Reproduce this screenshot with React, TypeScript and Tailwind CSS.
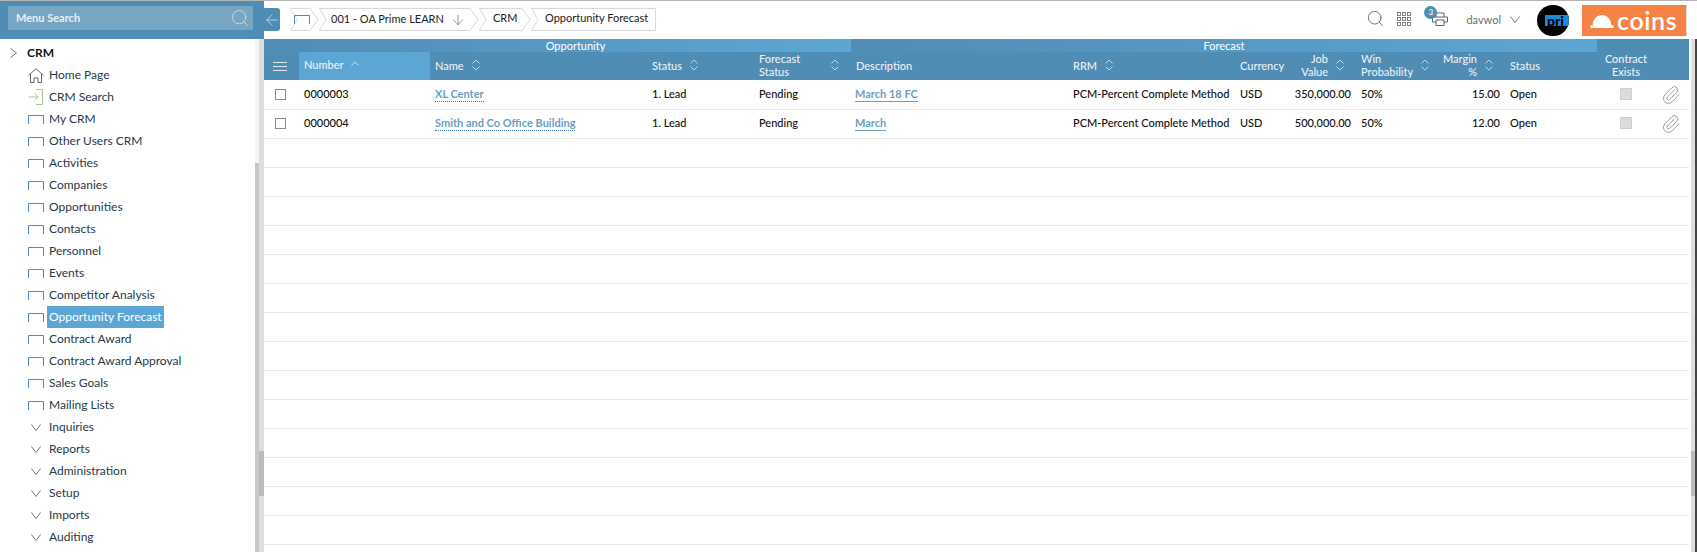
import React from 'react';
import { ArrowDown, ArrowLeft, Paperclip, Search } from 'lucide-react';

const BLUE = 'bg-[#4f8db5]';

const menuItems = [
  'My CRM',
  'Other Users CRM',
  'Activities',
  'Companies',
  'Opportunities',
  'Contacts',
  'Personnel',
  'Events',
  'Competitor Analysis',
  'Opportunity Forecast',
  'Contract Award',
  'Contract Award Approval',
  'Sales Goals',
  'Mailing Lists',
];

const folders = ['Inquiries', 'Reports', 'Administration', 'Setup', 'Imports', 'Auditing'];

const rows = [
  { number: '0000003', name: 'XL Center', description: 'March 18 FC', value: '350,000.00', margin: '15.00' },
  { number: '0000004', name: 'Smith and Co Office Building', description: 'March', value: '500,000.00', margin: '12.00' },
];

const cols = 'grid grid-cols-[35px_131px_217px_107px_97px_217px_167px_58px_63px_94px_55px_92px_58px_34px]';

const PageIcon = () => (
  <svg width="16" height="9" viewBox="0 0 16 9" fill="none" className="shrink-0">
    <path d="M0.5 9V0.5H15.5V9" stroke="#4f8db5" />
  </svg>
);

const SortIcon = () => (
  <svg width="8" height="12" viewBox="0 0 8 12" fill="none" className="shrink-0 ml-2">
    <path d="M0.5 4.5L4 1L7.5 4.5M0.5 7.5L4 11L7.5 7.5" stroke="#c9dce8" strokeWidth="0.9" />
  </svg>
);

const DownChevron = ({ className = '' }: { className?: string }) => (
  <svg width="10" height="7" viewBox="0 0 10 7" fill="none" className={`shrink-0 ${className}`}>
    <path d="M0.5 0.5L5 6.5L9.5 0.5" stroke="#777" />
  </svg>
);

const Crumb = ({ width, last, children }: { width: number; last?: boolean; children: React.ReactNode }) => (
  <div className="relative h-[23px] shrink-0 flex items-center whitespace-nowrap" style={{ width }}>
    <svg width={width} height="23" className="absolute inset-0" fill="none">
      <path
        d={
          last
            ? `M0.5 0.5H${width - 0.5}V22.5H0.5L7 11.5Z`
            : `M0.5 0.5H${width - 9}L${width - 1} 11.5L${width - 9} 22.5H0.5L7 11.5Z`
        }
        stroke="#d9d9d9"
      />
    </svg>
    <div className="relative flex items-center">{children}</div>
  </div>
);

const HeaderCell = ({ children, sort = true }: { children: React.ReactNode; sort?: boolean }) => (
  <div className="flex items-center pl-[5px] pb-[2px]">
    <span className="leading-[13px]">{children}</span>
    {sort && <SortIcon />}
  </div>
);

const Cell = ({ children, right = false }: { children?: React.ReactNode; right?: boolean }) => (
  <div className={`flex items-center whitespace-nowrap pl-[5px] pb-[2px] ${right ? 'justify-end pr-[5px]' : ''}`}>{children}</div>
);

export default function App() {
  return (
    <div
      className="w-[1697px] h-[552px] overflow-hidden bg-white flex flex-col text-[11px] font-medium"
      style={{ fontFamily: 'Lato, "Open Sans", sans-serif' }}
    >
      <div className="h-px shrink-0 bg-[#b5b5b5]" />
      <div className="flex flex-1 min-h-0">
        {/* Sidebar */}
        <aside className="w-[264px] shrink-0 flex flex-col">
          <div className={`h-[38px] shrink-0 ${BLUE} pt-[5px] pl-2 pr-[11px]`}>
            <div className="h-6 bg-[#76a6c4] flex items-center justify-between pl-2 pr-[3px] text-[11px] font-bold text-[#e8f0f5]">
              Menu Search
              <Search size={20} strokeWidth={1} className="text-[#d5e3ec]" />
            </div>
          </div>
          <div className="flex flex-1 min-h-0">
            <div className="flex-1 min-w-0 overflow-hidden text-[12px] font-normal text-[#263a4a]">
              <div className="h-[25px] pt-[3px] flex items-center pl-[10px] gap-[10px] text-[12px] font-bold text-[#111]">
                <svg width="7" height="10" viewBox="0 0 7 10" fill="none" className="shrink-0">
                  <path d="M0.5 0.5L6.5 5L0.5 9.5" stroke="#777" />
                </svg>
                <span>CRM</span>
              </div>
              <div className="h-[22px] flex items-center pl-[28px] gap-[5px]">
                <svg width="16" height="15" viewBox="0 0 16 15" fill="none" className="shrink-0">
                  <path d="M0.5 7.5L8 0.7L15.5 7.5M2.5 6V14.5H6V10H10V14.5H13.5V6" stroke="#555" strokeWidth="0.9" />
                </svg>
                <span>Home Page</span>
              </div>
              <div className="h-[22px] flex items-center pl-[28px] gap-[5px]">
                <svg width="16" height="16" viewBox="0 0 16 16" fill="none" className="shrink-0">
                  <path d="M0.5 8H10M6.5 4.5L10 8L6.5 11.5M8 0.5H14.5V15.5H8" stroke="#a9c48f" />
                </svg>
                <span>CRM Search</span>
              </div>
              {menuItems.map((item) => (
                <div key={item} className="h-[22px] flex items-center pl-[28px] gap-[3px]">
                  <PageIcon />
                  <span
                    className={
                      item === 'Opportunity Forecast'
                        ? 'h-[22px] flex items-center px-[2px] bg-[#5ca6d6] text-white'
                        : 'px-[2px]'
                    }
                  >
                    {item}
                  </span>
                </div>
              ))}
              {folders.map((item) => (
                <div key={item} className="h-[22px] flex items-center pl-[31px] gap-2">
                  <DownChevron />
                  <span>{item}</span>
                </div>
              ))}
            </div>
            <div className="w-1 shrink-0 pt-[124px] bg-[#f4f4f4]">
              <div className="h-full bg-[#c8c8c8]" />
            </div>
            <div className="w-[5px] shrink-0 bg-[#dedede] pt-[412px]">
              <div className="h-[45px] bg-[#bcbcbc]" />
            </div>
          </div>
        </aside>

        {/* Main */}
        <main className="flex-1 min-w-0 flex flex-col">
          <div className="h-[38px] shrink-0 flex items-start pt-[7px]">
            <div className={`w-4 h-[23px] ${BLUE} rounded-r-[3px] flex items-center justify-center shrink-0`}>
              <ArrowLeft size={18} strokeWidth={1} className="text-[#d5e3ec] shrink-0" />
            </div>
            <div className="flex ml-[10px] text-[11px] font-normal text-[#222]">
              <Crumb width={29}>
                <span className="ml-[4px]">
                  <PageIcon />
                </span>
              </Crumb>
              <Crumb width={160}>
                <span className="ml-[12px]">001 - OA Prime LEARN</span>
                <ArrowDown size={16} strokeWidth={1} className="ml-[6px] text-[#666]" />
              </Crumb>
              <Crumb width={52}>
                <span className="ml-[14px] -mt-[3px]">CRM</span>
              </Crumb>
              <Crumb width={125} last>
                <span className="ml-[14px] -mt-[3px]">Opportunity Forecast</span>
              </Crumb>
            </div>
            <div className="flex-1 flex items-start justify-end pr-[10px]">
              <Search size={19} strokeWidth={1} className="text-[#555] mt-[1px] mr-[12px]" />
              <svg width="14" height="14" viewBox="0 0 14 14" className="mt-1 mr-[21px]" fill="none" stroke="#666" strokeWidth="0.8">
                {[0.5, 5.5, 10.5].map((y) =>
                  [0.5, 5.5, 10.5].map((x) => <rect key={`${x}-${y}`} x={x} y={y} width="3" height="3" />)
                )}
              </svg>
              <div className="relative mt-1 mr-[18px]">
                <svg width="16" height="14" viewBox="0 0 16 14" fill="none" stroke="#555" strokeWidth="0.9">
                  <path d="M4 5V1H12V5M0.5 5H15.5V10H12M4 10H0.5V5M4 8H12V13.5H4Z" />
                </svg>
                <div className="absolute -top-[6px] -left-2 w-[13px] h-[13px] rounded-full bg-[#4f8db5] text-white text-[8px] leading-[13px] text-center">3</div>
              </div>
              <span className="mt-[4px] mr-[9px] font-normal text-[#6b6b6b]">davwol</span>
              <DownChevron className="mt-[8px] mr-[17px]" />
              <div className="w-[32px] h-[31px] -mt-[3px] mr-[13px] rounded-full bg-black overflow-hidden flex items-center pl-[8px]">
                <div className="h-[11px] flex-1 pl-[2px] bg-[#1e88d8] flex items-center overflow-hidden">
                  <span className="text-[14px] leading-none font-black text-black">pri</span>
                </div>
              </div>
              <div className="w-[105px] h-[31px] -mt-[3px] bg-[#f58345] flex items-center pl-2 gap-[3px] border-r border-[#ddd]">
                <svg width="24" height="14" viewBox="0 0 26 15" fill="#fff" className="shrink-0">
                  <path d="M3 12C3 5 8 1 13 1C18 1 23 5 23 12H25.5V15H0.5V12Z" />
                </svg>
                <span className="text-[25px] leading-none font-semibold tracking-[0.6px] text-white">coins</span>
              </div>
            </div>
          </div>

          <div className="flex flex-1 min-h-0">
            <div className="w-[1425px] shrink-0 flex flex-col">
              {/* Group band */}
              <div className="h-[13px] shrink-0 flex text-[11px] font-normal text-white leading-[13px]">
                <div className="w-[587px] pl-[36px] text-center bg-gradient-to-r from-[#4f8db5] to-[#5ca6d6]">Opportunity</div>
                <div className="w-[746px] text-center bg-gradient-to-r from-[#4f8db5] to-[#5ca6d6]">Forecast</div>
                <div className={`flex-1 ${BLUE}`} />
              </div>

              {/* Column headers */}
              <div className={`${cols} h-[28px] shrink-0 ${BLUE} text-[11px] text-[#e8f0f5]`}>
                <div className="flex items-center justify-center pr-[3px]">
                  <svg width="14" height="9" viewBox="0 0 14 9" stroke="#fff" strokeWidth="0.8">
                    <path d="M0 0.5H14M0 4.5H14M0 8.5H14" />
                  </svg>
                </div>
                <div className="flex items-center pl-[5px] pb-[2px] bg-[#5ca6d6]">
                  Number
                  <svg width="8" height="5" viewBox="0 0 8 5" fill="none" className="ml-[7px] -mt-[3px]">
                    <path d="M0.5 4.5L4 1L7.5 4.5" stroke="#d5e3ec" strokeWidth="0.9" />
                  </svg>
                </div>
                <HeaderCell>Name</HeaderCell>
                <HeaderCell>Status</HeaderCell>
                <div className="flex items-center pl-[5px] pb-[2px] justify-between pr-[12px]">
                  <span className="leading-[13px]">Forecast<br />Status</span>
                  <SortIcon />
                </div>
                <HeaderCell sort={false}>Description</HeaderCell>
                <HeaderCell>RRM</HeaderCell>
                <HeaderCell sort={false}>Currency</HeaderCell>
                <div className="flex items-center justify-end pb-[2px] pr-[12px]">
                  <span className="leading-[13px] text-right">Job<br />Value</span>
                  <SortIcon />
                </div>
                <HeaderCell>Win<br />Probability</HeaderCell>
                <div className="flex items-center justify-end pb-[2px] pr-[12px]">
                  <span className="leading-[13px] text-right">Margin<br />%</span>
                  <SortIcon />
                </div>
                <HeaderCell sort={false}>Status</HeaderCell>
                <div className="flex items-center justify-center pb-[2px] text-center leading-[13px]">
                  <span>Contract<br />Exists</span>
                </div>
                <div />
              </div>
              <div className="h-px shrink-0" />

              {/* Rows */}
              {rows.map((row) => (
                <div key={row.number} className={`${cols} h-[29px] shrink-0 border-b border-[#e6e6e6] text-[#111]`}>
                  <div className="flex items-center justify-center -mt-[2px] pr-[3px]">
                    <div className="w-[11px] h-[11px] border border-[#8a8a8a] bg-white" />
                  </div>
                  <Cell>{row.number}</Cell>
                  <Cell>
                    <span className="text-[#6d9ec0] font-bold border-b border-dotted border-[#3a78c0] leading-[14px]">{row.name}</span>
                  </Cell>
                  <Cell>1. Lead</Cell>
                  <Cell>Pending</Cell>
                  <div className="flex items-center pl-1 pb-[2px]">
                    <span className="text-[#6d9ec0] font-bold border-b border-[#6d9ec0] leading-[14px]">{row.description}</span>
                  </div>
                  <Cell>PCM-Percent Complete Method</Cell>
                  <Cell>USD</Cell>
                  <Cell right>{row.value}</Cell>
                  <Cell>50%</Cell>
                  <Cell right>{row.margin}</Cell>
                  <Cell>Open</Cell>
                  <div className="flex items-center justify-center -mt-[2px]">
                    <div className="w-3 h-3 bg-[#dcdcdc] border border-[#cfcfcf]" />
                  </div>
                  <div className="flex items-center justify-center pr-[3px]">
                    <Paperclip size={20} strokeWidth={1} className="text-[#888] shrink-0" />
                  </div>
                </div>
              ))}
              {Array.from({ length: 14 }).map((_, i) => (
                <div key={i} className="h-[29px] shrink-0 border-b border-[#e6e6e6]" />
              ))}
            </div>
            <div className="w-0.5 shrink-0" />
            <div className="w-1 shrink-0 bg-[#dedede] pt-[412px]">
              <div className="h-[45px] bg-[#bcbcbc]" />
            </div>
            <div className="w-0.5 shrink-0 bg-[#444]" />
          </div>
        </main>
      </div>
    </div>
  );
}
